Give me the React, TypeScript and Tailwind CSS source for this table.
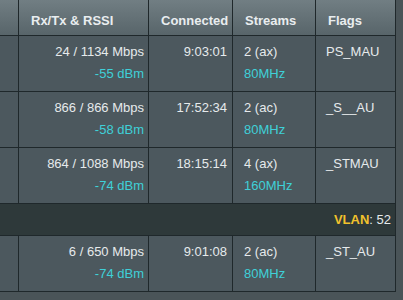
const rows = [
  { rate: "24 / 1134 Mbps", rssi: "-55 dBm", time: "9:03:01", streams: "2 (ax)", bw: "80MHz", flags: "PS_MAU" },
  { rate: "866 / 866 Mbps", rssi: "-58 dBm", time: "17:52:34", streams: "2 (ac)", bw: "80MHz", flags: "_S__AU" },
  { rate: "864 / 1088 Mbps", rssi: "-74 dBm", time: "18:15:14", streams: "4 (ax)", bw: "160MHz", flags: "_STMAU" },
];

const vlanRows = [
  { rate: "6 / 650 Mbps", rssi: "-74 dBm", time: "9:01:08", streams: "2 (ac)", bw: "80MHz", flags: "_ST_AU" },
];

type Row = (typeof rows)[number];

const cols = "grid grid-cols-[19px_130px_84px_83px_80px]";
const cell = "border-r border-b border-[#1f282b] bg-[#4c585e]";

function DataRow({ r }: { r: Row }) {
  return (
    <div className={`${cols} h-[56px]`}>
      <div className={cell} />
      <div className={`${cell} pt-[5px] pr-[4px] text-right leading-[22px]`}>
        <div className="text-[#e6eaec]">{r.rate}</div>
        <div className="text-[#3fd0d8]">{r.rssi}</div>
      </div>
      <div className={`${cell} pt-[5px] pr-[5px] text-right leading-[22px] text-[#e6eaec]`}>{r.time}</div>
      <div className={`${cell} pt-[5px] pl-[11px] leading-[22px]`}>
        <div className="text-[#e6eaec]">{r.streams}</div>
        <div className="text-[#3fd0d8]">{r.bw}</div>
      </div>
      <div className={`${cell} pt-[5px] pl-[10px] leading-[22px] text-[#e6eaec]`}>{r.flags}</div>
    </div>
  );
}

export default function App() {
  const head = "border-r border-b border-[#1f282b] bg-gradient-to-b from-[#717e83] to-[#58656a] pl-[12px] pt-[11px] font-bold text-[#e9edef]";
  return (
    <div className="h-[300px] w-[403px] overflow-hidden bg-[#4a5458] text-[13px]" style={{ fontFamily: '"Liberation Sans", Arial, sans-serif' }}>
      <div className="w-[396px]">
        <div className={`${cols} h-[36px]`}>
          <div className={head} />
          <div className={head}>Rx/Tx &amp; RSSI</div>
          <div className={head}>Connected</div>
          <div className={head}>Streams</div>
          <div className={head}>Flags</div>
        </div>
        {rows.map((r) => (
          <DataRow key={r.flags} r={r} />
        ))}
        <div className="flex h-[32px] items-center justify-end border-r border-b border-[#1f282b] bg-[#2e393a] pr-[4px] text-[#e6eaec]">
          <span className="font-bold text-[#f1c12c]">VLAN</span>: 52
        </div>
        {vlanRows.map((r) => (
          <DataRow key={r.flags} r={r} />
        ))}
      </div>
    </div>
  );
}
